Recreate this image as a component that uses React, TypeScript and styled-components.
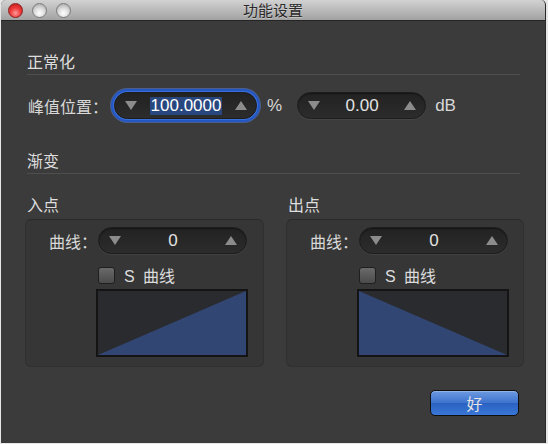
import styled, { createGlobalStyle } from 'styled-components';

const GlobalStyle = createGlobalStyle`
  html, body {
    margin: 0;
    padding: 0;
    background: #e6e6e6;
  }
  body {
    font-family: "Liberation Sans", "Noto Sans CJK SC", sans-serif;
  }
`;

const Window = styled.div`
  width: 545px;
  height: 443px;
  margin-left: 1px;
  display: flex;
  flex-direction: column;
  background: #3b3b3b;
  border-right: 1px solid #2a2a2a;
  border-radius: 5px 5px 0 0;
  overflow: hidden;
  box-sizing: border-box;
`;

const TitleBar = styled.div`
  position: relative;
  height: 21px;
  flex-shrink: 0;
  display: flex;
  align-items: center;
  justify-content: center;
  background: linear-gradient(#d2d2d2, #a2a2a2);
  border-bottom: 1px solid #252525;
  box-sizing: border-box;
`;

const Lights = styled.div`
  position: absolute;
  left: 7px;
  top: 3px;
  display: flex;
  gap: 9px;
`;

const Light = styled.span<{ $red?: boolean }>`
  width: 15px;
  height: 15px;
  border-radius: 50%;
  box-sizing: border-box;
  border: 1px solid ${(p) => (p.$red ? '#8a2020' : '#7c7c7c')};
  background: ${(p) =>
    p.$red
      ? 'radial-gradient(circle at 50% 70%, #ff9a9a 0%, #ef3b3b 45%, #b81515 100%)'
      : 'radial-gradient(circle at 50% 70%, #ffffff 0%, #dcdcdc 45%, #9a9a9a 100%)'};
`;

const Title = styled.div`
  font-family: "Noto Sans CJK SC", sans-serif;
  font-size: 15px;
  line-height: 18px;
  color: #2a2a2a;
  text-shadow: 0 1px 0 rgba(255, 255, 255, 0.35);
`;

const Body = styled.div`
  flex: 1;
  display: flex;
  flex-direction: column;
  padding: 30px 25px 0 24px;
`;

const SectionHeader = styled.div<{ $top?: number }>`
  margin-top: ${(p) => p.$top ?? 0}px;
  margin-left: 2px;
  padding-bottom: 2px;
  border-bottom: 1px solid #4e4e4e;
  font-family: "Noto Sans CJK SC", sans-serif;
  font-size: 16px;
  line-height: 21px;
  color: #dedede;
`;

const PeakRow = styled.div`
  display: flex;
  align-items: center;
  margin-top: 17px;
  margin-left: 3px;
  height: 27px;
`;

const Label = styled.span`
  font-family: "Noto Sans CJK SC", sans-serif;
  font-size: 16px;
  color: #d8d8d8;
  white-space: nowrap;
`;

const Unit = styled.span<{ $left: number }>`
  margin-left: ${(p) => p.$left}px;
  font-size: 17px;
  color: #d8d8d8;
`;

const Spinner = styled.div<{ $width: number; $focus?: boolean; $left?: number }>`
  width: ${(p) => p.$width}px;
  height: 27px;
  margin-left: ${(p) => p.$left ?? 0}px;
  display: flex;
  align-items: center;
  justify-content: space-between;
  padding: 0 9px 0 10px;
  box-sizing: border-box;
  border-radius: 14px;
  background: linear-gradient(#222222, #2c2c2c);
  border: 1px solid #1d1d1d;
  box-shadow: ${(p) =>
    p.$focus
      ? '0 0 0 1px #3a6fd8, 0 0 0 3px #2557c4, 0 0 0 4px rgba(90,130,220,0.5)'
      : 'inset 0 1px 1px rgba(0,0,0,0.4), 0 1px 0 rgba(255,255,255,0.05)'};
`;

const Arrow = styled.svg`
  width: 12px;
  height: 9px;
  flex-shrink: 0;
`;

const Value = styled.span<{ $selected?: boolean }>`
  font-size: 17px;
  line-height: 18px;
  color: ${(p) => (p.$selected ? '#ffffff' : '#e2e2e2')};
  background: ${(p) => (p.$selected ? '#28477e' : 'transparent')};
  padding: 0 1px;
`;

const Columns = styled.div`
  display: grid;
  grid-template-columns: 239px 238px;
  column-gap: 22px;
  margin-top: 20px;
`;

const Column = styled.div`
  display: flex;
  flex-direction: column;
`;

const GroupLabel = styled.div`
  margin-left: 2px;
  font-family: "Noto Sans CJK SC", sans-serif;
  font-size: 16px;
  line-height: 20px;
  color: #dedede;
`;

const GroupBox = styled.div`
  margin-top: 5px;
  height: 148px;
  box-sizing: border-box;
  border-radius: 6px;
  background: #363636;
  border: 1px solid #303030;
  border-top-color: #2a2a2a;
  display: grid;
  grid-template-columns: 70px 152px;
  align-content: start;
  padding-top: 7px;
`;

const CurveLabel = styled(Label)`
  align-self: center;
  padding-left: 23px;
`;

const CheckRow = styled.div`
  grid-column: 2;
  display: flex;
  align-items: center;
  gap: 9px;
  margin-top: 13px;
  margin-left: 2px;
  height: 16px;
`;

const Checkbox = styled.span`
  width: 17px;
  height: 17px;
  box-sizing: border-box;
  border-radius: 3px;
  border: 1px solid #1f1f1f;
  background: linear-gradient(#6a6a6a, #4b4b4b);
`;

const CheckText = styled.span`
  font-size: 16px;
  color: #dcdcdc;
  word-spacing: 4px;
  font-family: "Liberation Sans", "Noto Sans CJK SC", sans-serif;
`;

const Graph = styled.div`
  grid-column: 2;
  margin-top: 6px;
  width: 152px;
  height: 68px;
  box-sizing: border-box;
  border: 2px solid #141414;
  background: #2a2b2e;
  display: flex;
`;

const GraphSvg = styled.svg`
  width: 100%;
  height: 100%;
  display: block;
`;

const Footer = styled.div`
  display: flex;
  justify-content: flex-end;
  margin-top: 23px;
  padding-right: 1px;
`;

const OkButton = styled.button`
  width: 89px;
  height: 26px;
  border-radius: 5px;
  border: 1px solid #0f0f0f;
  background: linear-gradient(#6d9be0 0%, #3f74cf 48%, #2a62c2 52%, #3a77d6 100%);
  box-shadow: inset 0 1px 0 rgba(255, 255, 255, 0.25);
  color: #e4e4e4;
  font-family: "Noto Sans CJK SC", sans-serif;
  font-size: 16px;
  line-height: 1;
  padding: 0;
  cursor: pointer;
`;

const Down = () => (
  <Arrow viewBox="0 0 12 9">
    <polygon points="0,0 12,0 6,9" fill="#8c8c8c" />
  </Arrow>
);

const Up = () => (
  <Arrow viewBox="0 0 12 9">
    <polygon points="6,0 12,9 0,9" fill="#8c8c8c" />
  </Arrow>
);

interface FadeProps {
  title: string;
  rising: boolean;
}

const FadeGroup = ({ title, rising }: FadeProps) => (
  <Column>
    <GroupLabel>{title}</GroupLabel>
    <GroupBox>
      <CurveLabel>曲线：</CurveLabel>
      <Spinner $width={149} $left={2}>
        <Down />
        <Value>0</Value>
        <Up />
      </Spinner>
      <CheckRow>
        <Checkbox />
        <CheckText>S 曲线</CheckText>
      </CheckRow>
      <Graph>
        <GraphSvg viewBox="0 0 148 64" preserveAspectRatio="none">
          <polygon
            points={rising ? '0,64 148,0 148,64' : '0,0 148,64 0,64'}
            fill="#324674"
          />
        </GraphSvg>
      </Graph>
    </GroupBox>
  </Column>
);

const App = () => (
  <>
    <GlobalStyle />
    <Window>
      <TitleBar>
        <Lights>
          <Light $red />
          <Light />
          <Light />
        </Lights>
        <Title>功能设置</Title>
      </TitleBar>
      <Body>
        <SectionHeader>正常化</SectionHeader>
        <PeakRow>
          <Label>峰值位置：</Label>
          <Spinner $width={143} $focus $left={6}>
            <Down />
            <Value $selected>100.0000</Value>
            <Up />
          </Spinner>
          <Unit $left={10}>%</Unit>
          <Spinner $width={129} $left={15}>
            <Down />
            <Value>0.00</Value>
            <Up />
          </Spinner>
          <Unit $left={9}>dB</Unit>
        </PeakRow>
        <SectionHeader $top={31}>渐变</SectionHeader>
        <Columns>
          <FadeGroup title="入点" rising />
          <FadeGroup title="出点" rising={false} />
        </Columns>
        <Footer>
          <OkButton>好</OkButton>
        </Footer>
      </Body>
    </Window>
  </>
);

export default App;
